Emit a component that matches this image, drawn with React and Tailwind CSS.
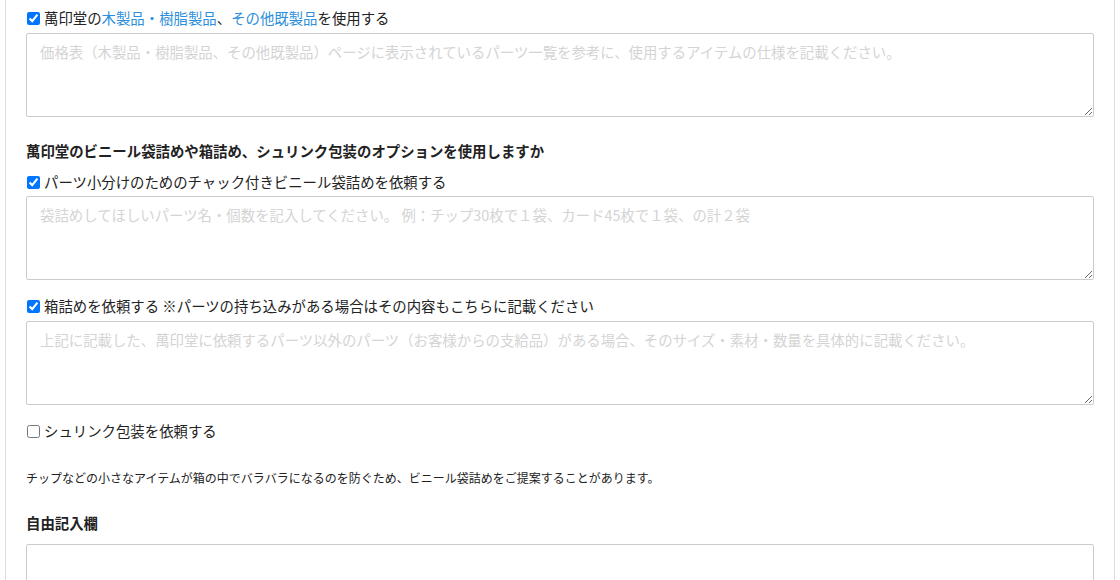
import React from 'react';

const font = { fontFamily: '"Noto Sans CJK JP", "Noto Sans", sans-serif' };

const Check = ({ checked, children, className }) => (
  <label className={`flex items-center h-6 text-[14.4px] text-[#222] ${className || ''}`}>
    <input type="checkbox" defaultChecked={checked} className="w-[13px] h-[13px] ml-[1px] mr-[4px] accent-[#0075ff]" />
    <span>{children}</span>
  </label>
);

const Area = ({ placeholder, className }) => (
  <textarea
    placeholder={placeholder}
    className={`block w-full h-[84px] border border-[#cccccc] rounded-[2px] px-[13px] py-[6px] text-[14.4px] leading-6 text-[#222] placeholder:text-[#d4d4d4] resize-y outline-none ${className || ''}`}
  />
);

export default function App() {
  return (
    <div className="bg-white w-[1120px] h-[580px] overflow-hidden" style={font}>
      <div className="ml-[5px] w-[1110px] border-x border-[#dddddd] px-5 pt-[6px] pb-10">
        <Check checked>
          萬印堂の<span className="text-[#2d8fdb]">木製品・樹脂製品</span>、<span className="text-[#2d8fdb]">その他既製品</span>を使用する
        </Check>
        <Area className="mt-[3px]" placeholder="価格表（木製品・樹脂製品、その他既製品）ページに表示されているパーツ一覧を参考に、使用するアイテムの仕様を記載ください。" />

        <h3 className="mt-[22px] h-6 leading-6 text-[14.4px] font-bold text-[#222]">
          萬印堂のビニール袋詰めや箱詰め、シュリンク包装のオプションを使用しますか
        </h3>
        <Check checked className="mt-[7px]">パーツ小分けのためのチャック付きビニール袋詰めを依頼する</Check>
        <Area className="mt-[2px]" placeholder="袋詰めしてほしいパーツ名・個数を記入してください。 例：チップ30枚で１袋、カード45枚で１袋、の計２袋" />

        <Check checked className="mt-[14px]">箱詰めを依頼する ※パーツの持ち込みがある場合はその内容もこちらに記載ください</Check>
        <Area className="mt-[3px]" placeholder="上記に記載した、萬印堂に依頼するパーツ以外のパーツ（お客様からの支給品）がある場合、そのサイズ・素材・数量を具体的に記載ください。" />

        <Check className="mt-[14px]">シュリンク包装を依頼する</Check>

        <p className="mt-[26px] h-[18px] leading-[18px] text-[12px] text-[#222]">
          チップなどの小さなアイテムが箱の中でバラバラになるのを防ぐため、ビニール袋詰めをご提案することがあります。
        </p>

        <h3 className="mt-[24px] h-6 leading-6 text-[14.4px] font-bold text-[#222]">自由記入欄</h3>
        <Area className="mt-[9px] h-[120px]" placeholder="" />
      </div>
    </div>
  );
}
